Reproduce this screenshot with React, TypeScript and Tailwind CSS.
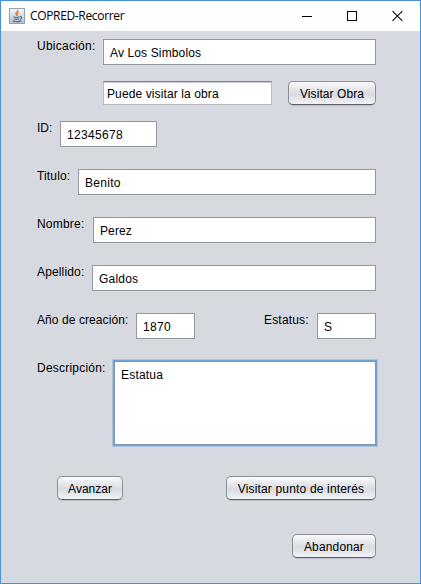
import type { ReactNode } from 'react';

function Label({ children, className = '' }: { children: ReactNode; className?: string }) {
  return <label className={`shrink-0 whitespace-nowrap leading-[14px] ${className}`}>{children}</label>;
}

function Field({ value, className = '' }: { value: string; className?: string }) {
  return (
    <div className={`h-[26px] whitespace-nowrap border border-[#9297a1] bg-white pl-1.5 pt-[6px] leading-[14px] ${className}`}>
      {value}
    </div>
  );
}

function Button({ children, className = '' }: { children: ReactNode; className?: string }) {
  return (
    <button
      className={`flex h-6 shrink-0 items-center justify-center whitespace-nowrap rounded-[5px] border border-[#8b8e94] border-b-[#5d6067] bg-linear-to-b from-[#fafafb] via-[#d8dbe1] via-55% to-[#f1f3f8] pt-px leading-[14px] shadow-[0_1px_0_#b9bcc4] ${className}`}
    >
      {children}
    </button>
  );
}

function JavaIcon() {
  return (
    <svg width="16" height="16" viewBox="0 0 16 16" className="ml-2 shrink-0">
      <defs>
        <linearGradient id="tile" x1="0" y1="0" x2="0" y2="1">
          <stop offset="0" stopColor="#f6f8f9" />
          <stop offset="1" stopColor="#b6c3cc" />
        </linearGradient>
      </defs>
      <rect x=".5" y=".5" width="15" height="15" fill="url(#tile)" stroke="#91a4b3" />
      <path d="M8.7 1.8c1 1.7-3 2.5-1.8 4.3L8 8M10 4c-2 .8-2.6 1.7-1.2 3.8" fill="none" stroke="#e5793c" strokeWidth="1.2" />
      <path d="M4.5 8.8c1.5.8 4.8.6 6.2 0M5 10.8c1.4.7 3.8.6 5.2 0M3.5 12.8c2 1.2 6.8 1.2 9 0M11 8.7c2.6-.4 2 2-.1 2.5" fill="none" stroke="#47708e" strokeWidth="1.1" />
    </svg>
  );
}

export default function App() {
  return (
    <div className="flex h-[584px] w-[421px] flex-col border border-[#4a90d2] bg-[#d6d9df] font-['Liberation_Sans',Arial,sans-serif] text-[12px] text-black">
      <header className="flex h-[30px] shrink-0 items-center bg-white">
        <JavaIcon />
        <h1 className="ml-[5px] font-['Open_Sans',sans-serif] text-[12px] leading-4 tracking-[-0.34px]">COPRED-Recorrer</h1>
        <div className="ml-auto mr-[17px] flex gap-[35px]">
          <svg width="10" height="10" viewBox="0 0 10 10" shapeRendering="crispEdges"><path d="M0 5.5H10" stroke="#000" /></svg>
          <svg width="10" height="10" viewBox="0 0 10 10" shapeRendering="crispEdges"><path d="M.5.5H9.5V9.5H.5Z" fill="none" stroke="#000" /></svg>
          <svg width="11" height="10" viewBox="0 0 11 10"><path d="M.5.2 10.3 9.8M10.3.2.5 9.8" stroke="#000" strokeWidth="1.1" /></svg>
        </div>
      </header>
      <main className="flex w-[375px] flex-col pl-9 pt-2">
        <div className="flex h-[42px] items-start">
          <Label className="w-[66px] tracking-[0.25px]">Ubicación:</Label>
          <Field value="Av Los Simbolos" className="flex-1 tracking-[0.13px]" />
        </div>
        <div className="flex h-10 items-start pl-[66px]">
          <div className="h-6 w-[169px] border border-[#b9bcc1] border-t-[#85878b] bg-white pl-[3px] pt-[5px] leading-[14px] tracking-[0.11px] shadow-[inset_0_1px_0_#c5c7ca]">Puede visitar la obra</div>
          <Button className="ml-auto w-[88px] tracking-[0.08px]">Visitar Obra</Button>
        </div>
        <div className="flex h-12 items-start">
          <Label className="w-[23px]">ID:</Label>
          <Field value="12345678" className="w-[97px] tracking-[0.32px]" />
        </div>
        <div className="flex h-12 items-start">
          <Label className="w-[41px] tracking-[0.15px]">Titulo:</Label>
          <Field value="Benito" className="flex-1 tracking-[0.3px]" />
        </div>
        <div className="flex h-12 items-start">
          <Label className="w-14 tracking-[0.2px]">Nombre:</Label>
          <Field value="Perez" className="flex-1 tracking-[0.1px]" />
        </div>
        <div className="flex h-12 items-start">
          <Label className="w-[55px] tracking-[0.15px]">Apellido:</Label>
          <Field value="Galdos" className="flex-1 tracking-[0.2px]" />
        </div>
        <div className="flex h-12 items-start">
          <Label className="w-[99px] tracking-[0.08px]">Año de creación:</Label>
          <Field value="1870" className="w-[59px] tracking-[0.32px]" />
          <Label className="ml-auto w-[53px] tracking-[0.18px]">Estatus:</Label>
          <Field value="S" className="w-[59px]" />
        </div>
        <div className="flex h-[115px] items-start">
          <Label className="w-[77px] tracking-[0.22px]">Descripción:</Label>
          <div className="h-[84px] flex-1 border border-[#8297ad] bg-white pl-1.5 pt-1.5 leading-[14px] tracking-[0.2px] shadow-[0_0_0_1px_#73a4d1,0_0_0_2px_#a9c5e2]">Estatua</div>
        </div>
        <div className="flex h-[58px] items-start justify-between pl-5">
          <Button className="w-[66px]">Avanzar</Button>
          <Button className="w-[150px] tracking-[0.17px]">Visitar punto de interés</Button>
        </div>
        <div className="flex justify-end">
          <Button className="w-[84px] tracking-[0.15px]">Abandonar</Button>
        </div>
      </main>
    </div>
  );
}
